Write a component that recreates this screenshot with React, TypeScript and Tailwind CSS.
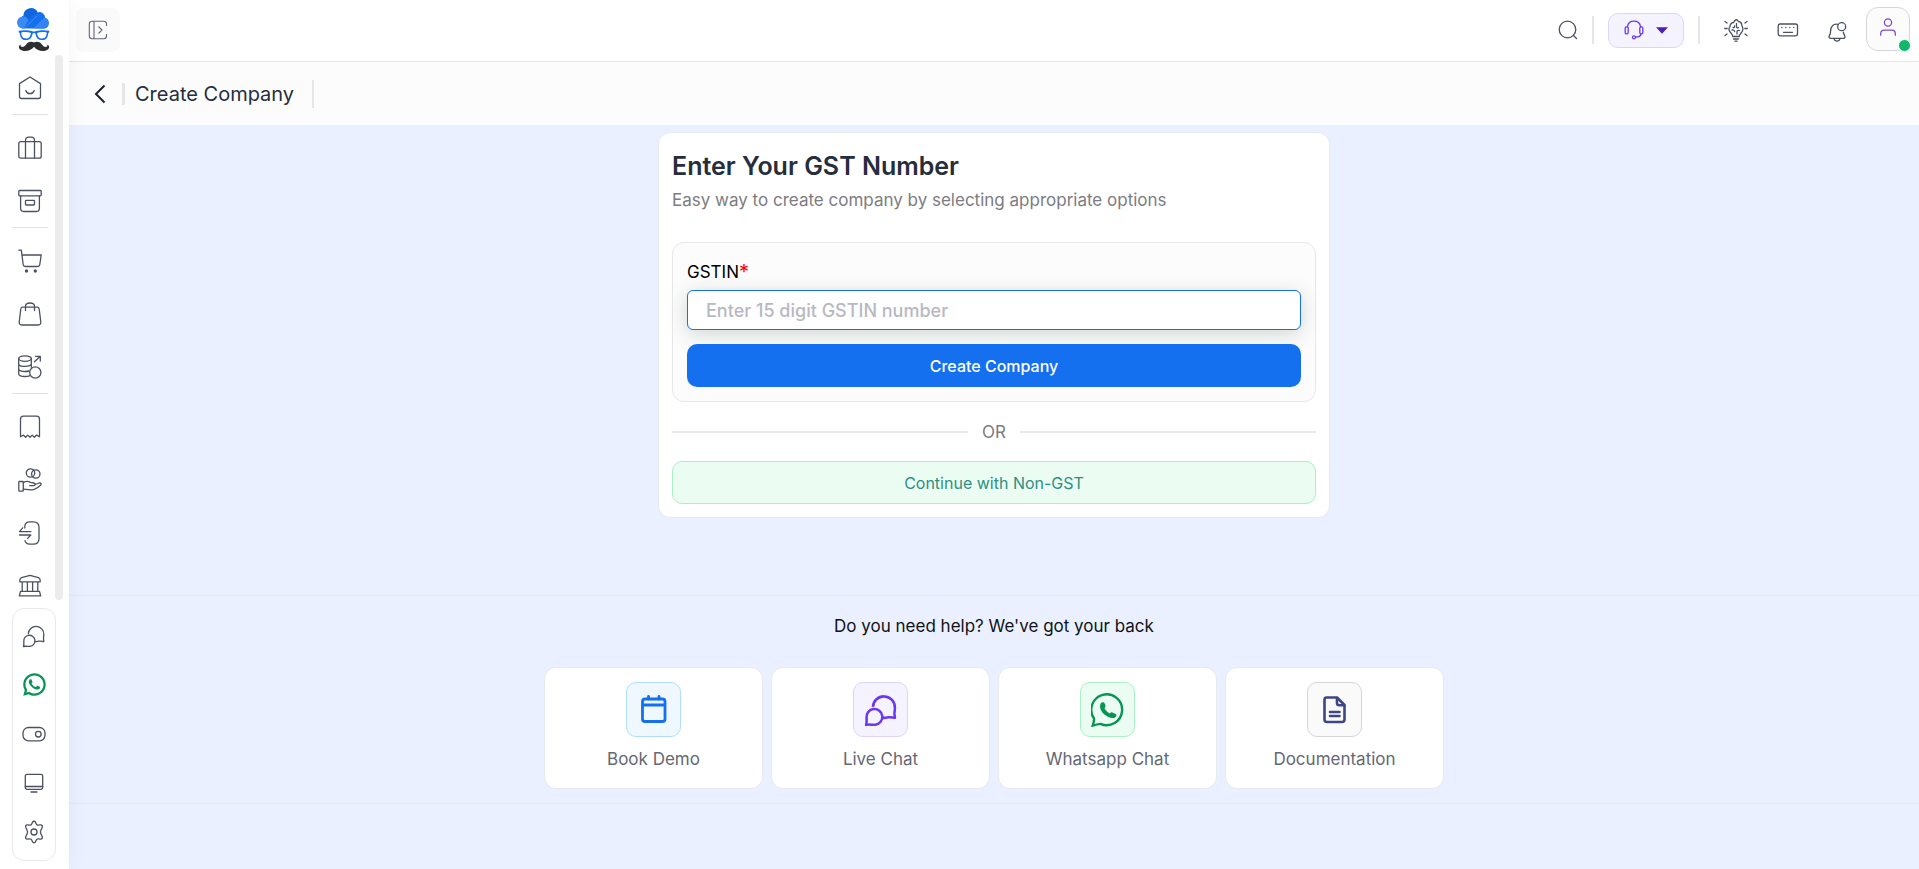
import type { ReactNode } from "react";
import { RiWhatsappLine } from "react-icons/ri";

type IconProps = { className?: string; children?: ReactNode };

function Icon({ className = "size-6", children }: IconProps) {
    return (
        <svg viewBox="0 0 24 24" className={className} fill="none" stroke="currentColor" strokeWidth="1.3" strokeLinecap="round" strokeLinejoin="round" aria-hidden="true">
            {children}
        </svg>
    );
}

function Logo() {
    return (
        <svg viewBox="0 0 36 44" className="h-11 w-9" aria-hidden="true">
            <path d="M6.5 20.5a6 6 0 0 1-1-11.6C6.5 8 7 8 7.600 7.600a7.400 7.400 0 0 1 14-3.200 5.800 5.800 0 0 1 7.600 5.400 5.600 5.600 0 0 1-.7 10.700Z" fill="#1570ef" />
            <path d="M6.500 20.500a6 6 0 0 1-.5-11.800c3-.5 5.500 1 6.500 3.200l-5 8.600Z" fill="#3b8af5" />
            <path d="M18 20.500 28.500 10a5.500 5.500 0 0 1 0 10.500Z" fill="#3383f2" />
            <path d="M7.600 7.600a7.400 7.400 0 0 1 14-3.200L12.500 12C11.500 9.500 9.700 8 7.600 7.600Z" fill="#1265dc" />
            <path d="m8 20.500 13.500-13M18 20.500 29 9.800" stroke="#5a9df7" strokeWidth=".6" />
            <path d="M2.500 22.800c4-.9 10-.9 14 .5 1 .3 2 .3 3 0 4-1.400 10-1.400 14-.5l-.5 1.800-.8.600c-.5 5-2.200 6.800-6 6.800-4 0-5.800-1.800-6.700-6.100-.5-1.200-2.500-1.200-3 0-.9 4.300-2.700 6.100-6.700 6.100-3.800 0-5.500-1.800-6-6.800l-.8-.6Z" fill="#1570ef" />
            <path d="M5.300 24.500c3-.8 6.800-.6 9.700.4-.8 4-2 5.500-5 5.500-3.200 0-4.500-1.500-4.700-5.900ZM30.700 24.500c-3-.8-6.800-.6-9.700.4.8 4 2 5.500 5 5.500 3.200 0 4.500-1.500 4.700-5.900Z" fill="white" />
            <path d="M18 34.500c-2.500-1.600-5.800-.8-7.500 1.400-1.800 2.300-3.600 3.800-5.500 2.600-.7-.6-.4-1.500.3-1.800C2.500 36.500 2 40 4.500 41.800c4.500 2.800 11 .7 13.500-3 2.500 3.700 9 5.800 13.500 3 2.500-1.800 2-5.300-.8-5.100.7.300 1 1.200.3 1.800-1.900 1.200-3.700-.3-5.500-2.600-1.700-2.200-5-3-7.500-1.400Z" fill="#2e302f" />
        </svg>
    );
}

const chatBubbles = (
    <>
        <path d="M6.300 9.800A7.600 7.600 0 0 1 21.800 10.500c.1 1.500-.4 3-.3 4.300l.3 2.700c-1.800-.1-3.200-.7-5-.3-1.500.4-2.700.5-4 .2" />
        <path d="M1.500 22.500c.6-2 .4-3.200.3-5a5.600 5.600 0 1 1 6.200 4.900c-2.400.3-4-.6-6.500.1Z" />
    </>
);

const navItems: { label: string; divider?: boolean; icon: ReactNode }[] = [
    {
        label: "Home",
        divider: true,
        icon: <><path d="M12 1 1.500 7.600v12.900c0 1.300.7 2 2 2h17c1.300 0 2-.7 2-2V7.600Z" /><path d="M7.800 14.500c.7 2.100 2.200 3.200 4.200 3.200s3.500-1.100 4.200-3.200" /></>,
    },
    {
        label: "Companies",
        icon: <><rect x=".8" y="5.700" width="22.400" height="16.500" rx="2" /><path d="M7.500 22V4.500c0-2.200 1.200-3.300 3.200-3.300h2.600c2 0 3.200 1.100 3.200 3.300V22" /></>,
    },
    {
        label: "Inventory",
        divider: true,
        icon: <><rect x=".8" y="1.500" width="22.400" height="5.300" rx=".8" /><path d="M2.600 6.800v12.500c0 2 1.200 3.200 3.200 3.200h12.400c2 0 3.200-1.200 3.200-3.200V6.800" /><rect x="7.500" y="11.300" width="9" height="4.700" rx=".8" /></>,
    },
    {
        label: "Purchases",
        icon: <><path d="M.8 1.200h2.500l1.900 14.300c.2 1.400.9 2 2.200 2h12.200c1.300 0 2-.6 2.200-2L23.200 6H4" /><circle cx="8.500" cy="22" r="1" fill="currentColor" /><circle cx="17.300" cy="22" r="1" fill="currentColor" /></>,
    },
    {
        label: "Sales",
        icon: <><path d="M4.800 5.200h14.400c1.200 0 1.800.6 2 1.800l1.600 13c.2 1.800-.8 3-2.500 3H3.700c-1.700 0-2.700-1.200-2.500-3l1.600-13c.2-1.200.8-1.800 2-1.800Z" /><path d="M7.500 8.500V4c.2-2 2-3 4.500-3s4.300 1 4.500 3v4.500" /></>,
    },
    {
        label: "Payments",
        divider: true,
        icon: <><ellipse cx="7" cy="3.600" rx="6.300" ry="2.700" /><path d="M.7 3.600v15.200c0 1.700 2.600 2.700 6.300 2.700 1.800 0 3.400-.2 4.500-.7M13.300 3.600v8.700M.7 8.700c0 1.700 2.600 2.700 6.300 2.700s6.300-1 6.300-2.700M.7 13.800c0 1.700 2.600 2.700 6.300 2.700 1.600 0 3-.2 4.200-.5" /><circle cx="17.300" cy="17.500" r="5.600" /><path d="m16.500 6.800 5.500-5.300m-4.500-.2h4.800V6" /></>,
    },
    {
        label: "Receipts",
        icon: <path d="M2.500 21.700V4.200C2.500 2.200 3.500 1.200 5.500 1.200h13c2 0 3 1 3 3v17.500l-2.800-1.600-2.300 2.100-2.200-2.100-2.200 2.100-2.200-2.100-2.200 2.100-2.300-2.100Z" />,
    },
    {
        label: "Lending",
        icon: <><circle cx="12.500" cy="5" r="4.200" /><circle cx="17.800" cy="6" r="4.200" /><rect x=".8" y="13.500" width="4.500" height="9.700" rx=".7" /><path d="M5.300 14.700c2.500-1.800 5-1.600 7.200-.3l3.300.6c1.900.5 1.700 2.600-.1 2.700h-4M17.200 16.500l4-1.500c1.800-.3 2.500 1.200 1.300 2.300-3.300 3-6.300 4.900-9.500 4.600l-7.700-.7" /></>,
    },
    {
        label: "Transfers",
        icon: <><path d="M6.800 7V5.300c.2-3 2-4.500 5-4.500h3.400c3.700 0 5.800 2 5.800 5.700v11c0 3.700-2.100 5.700-5.800 5.700h-3.400c-2.500 0-4.300-1.300-4.800-3.500" /><path d="M12.800 10.600H1.500l3.200-3.800M1.500 14h11.300l-3.200 3.400" /></>,
    },
    {
        label: "Banking",
        icon: <><path d="M1.800 6.400c0-1.200.4-2.200 1.800-2.700L12 1.300l8.400 2.400c1.400.5 1.800 1.500 1.800 2.700v1.400H1.800ZM4.200 7.800v9.500M9.400 7.800v9.500M14.600 7.800v9.500M19.800 7.800v9.500M2.500 17.300h19l1.200 4.500H1.300Z" /></>,
    },
];

const toolItems: { label: string; icon: ReactNode }[] = [
    { label: "Live chat", icon: <Icon>{chatBubbles}</Icon> },
    { label: "Whatsapp", icon: <RiWhatsappLine className="size-[27px] text-[#079455]" /> },
    { label: "Toggle", icon: <Icon><rect x="1" y="5.500" width="22" height="13.300" rx="5.500" /><circle cx="16.300" cy="12.200" r="2.800" /></Icon> },
    { label: "Display", icon: <Icon><rect x="3.300" y="3.300" width="17.400" height="15" rx="1.700" /><path d="M3.300 15.500h17.400M9 21h6" /></Icon> },
    { label: "Settings", icon: <Icon><circle cx="12" cy="12" r="3" /><path d="M10.500 2.300c.6-1.400 2.400-1.400 3 0l.8 1.800c.3.700 1.200 1.200 2 1.100l2.200-.3c1.500-.2 2.500 1.400 1.600 2.700l-1.300 3c-.5.900-.5 1.900 0 2.800l1.300 3c.9 1.300-.1 2.900-1.600 2.700l-2.200-.3c-.8-.1-1.700.4-2 1.100l-.8 1.800c-.6 1.400-2.400 1.400-3 0l-.8-1.800c-.3-.7-1.200-1.200-2-1.100l-2.200.3c-1.500.2-2.500-1.400-1.600-2.700l1.300-3c.5-.9.5-1.900 0-2.800l-1.300-3C3 6.300 4 4.700 5.500 4.900l2.200.3c.8.1 1.700-.4 2-1.100Z" /></Icon> },
];

const helpItems: { label: string; box: string; icon: ReactNode }[] = [
    {
        label: "Book Demo",
        box: "border-[#b2ddff] bg-[#eff8ff] text-[#1570ef]",
        icon: <svg viewBox="0 0 32 32" className="size-8" fill="none" stroke="currentColor" strokeWidth="2.800" strokeLinecap="round"><rect x="4.500" y="5" width="22.500" height="22.500" rx="2.500" /><path d="M5 11h21.500M10.500 5V2.500M21 5V2.500" /></svg>,
    },
    {
        label: "Live Chat",
        box: "border-[#d9d6fe] bg-[#f4f3ff] text-[#6938ef]",
        icon: <svg viewBox="0 0 24 24" className="size-[34px]" fill="none" stroke="currentColor" strokeWidth="1.800" strokeLinejoin="round">{chatBubbles}</svg>,
    },
    {
        label: "Whatsapp Chat",
        box: "border-[#aaf0c4] bg-[#ebfdf2] text-[#079455]",
        icon: (
            <svg viewBox="0 0 24 24" className="size-[34px]" aria-hidden="true">
                <path d="M1.200 23c.8-2.400 1.200-3.800.9-5A10.900 10.900 0 1 1 6.700 21.800c-1.700.2-3.500.6-5.500 1.200Z" fill="none" stroke="currentColor" strokeWidth="1.700" />
                <path d="M7.800 6.600c.9-.3 1.600 0 1.900.9l.5 1.400c.2.7 0 1.100-.6 1.800.8 1.700 2 2.900 3.700 3.700.7-.7 1.100-.9 1.800-.6l2 .8c.9.4 1 1 .7 1.800-.6 1.200-2 1.500-3.400 1.200C10 16.600 6.700 13 6.400 10c-.1-1.500.3-2.900 1.400-3.400Z" fill="currentColor" />
            </svg>
        ),
    },
    {
        label: "Documentation",
        box: "border-[#d6d6d8] bg-[#fafafa] text-[#3e4784]",
        icon: <svg viewBox="0 0 32 32" className="size-8" fill="none" stroke="currentColor" strokeWidth="2.600" strokeLinecap="round" strokeLinejoin="round"><path d="M7.500 3.500h10.500l7.500 7.500v14.500c0 1.700-.8 2.500-2.500 2.500H8c-1.700 0-2.500-.8-2.500-2.500V6c0-1.700.5-2.500 2-2.500Z" /><path d="M18 4v5c0 1.500.7 2.200 2.200 2.200h5M11 18h9.500M11 22h9.500" /></svg>,
    },
];

function Sidebar() {
    return (
        <aside className="relative z-10 flex h-full w-[69px] shrink-0 flex-col bg-white shadow-[0_0_20px_rgba(16,24,40,0.05)]">
            <a href="#home" aria-label="Dashboard" className="ml-4 mt-2 shrink-0">
                <Logo />
            </a>
            <div className="mb-2 mt-[3px] flex min-h-0 flex-1 justify-between">
                <nav className="mt-1.5 flex-1 overflow-hidden pl-3 text-[#4b5161]">
                    {navItems.map((item) => (
                        <div key={item.label}>
                            <a href="#nav" aria-label={item.label} className="flex h-[53px] w-9 items-center justify-center">
                                <Icon>{item.icon}</Icon>
                            </a>
                            {item.divider && <div className="mb-1.5 h-px w-9 bg-[#e2e2e5]" />}
                        </div>
                    ))}
                </nav>
                <div className="mr-1.5 w-2 rounded-full bg-[#ececec]" />
            </div>
            <div className="mb-2 ml-3 flex w-11 shrink-0 flex-col items-center rounded-xl border border-[#e9e9ea] pb-1 pt-0.5 text-[#4b5161]">
                {toolItems.map((item) => (
                    <button key={item.label} type="button" aria-label={item.label} className="flex h-[49px] w-full items-center justify-center">
                        {item.icon}
                    </button>
                ))}
            </div>
        </aside>
    );
}

function TopBar() {
    return (
        <header className="flex h-[62px] shrink-0 items-center justify-between border-b border-[#e6e6e8] bg-white pb-px pl-[7px] pr-[9px] text-[#4b5161]">
            <button type="button" aria-label="Expand menu" className="flex size-11 items-center justify-center rounded-lg bg-[#fafafa] text-[#626776]">
                <svg viewBox="0 0 20 20" className="size-5" fill="none" stroke="currentColor" strokeWidth="1.100">
                    <path d="M18.500 6V4c0-1.700-1-2.700-2.700-2.700H4C2.300 1.300 1.300 2.300 1.300 4v12c0 1.700 1 2.700 2.700 2.700h11.800c1.700 0 2.700-1 2.700-2.700v-2M6 1.300v17.400M10.500 6.500l3.500 3.500-3.500 3.500" />
                </svg>
            </button>
            <div className="flex items-center">
                <button type="button" aria-label="Search">
                    <svg viewBox="0 0 20 20" className="size-5" fill="none" stroke="currentColor" strokeWidth="1.300" strokeLinecap="round"><circle cx="9.500" cy="9.500" r="8.300" /><path d="m15.500 15.500 3 3" /></svg>
                </button>
                <div className="ml-3.5 h-7 w-0.5 bg-[#e6e6e8]" />
                <button type="button" aria-label="Support" className="ml-3.5 flex h-[35px] w-[76px] items-center justify-center gap-3 rounded-[10px] border border-[#d9d6fe] bg-[#f4f3ff] text-[#6938ef]">
                    <svg viewBox="0 0 20 20" className="size-5" fill="none" stroke="currentColor" strokeWidth="1.300" strokeLinecap="round">
                        <rect x="1.200" y="6.800" width="3" height="7" rx="1.200" /><rect x="15.800" y="6.800" width="3" height="7" rx="1.200" />
                        <path d="M3.500 6.500C4 3.200 6.600 1.200 10 1.200s6 2 6.500 5.300M17 13.800c-.4 2.500-2.200 3.300-5.200 3.300" /><circle cx="10" cy="17.300" r="1.500" />
                    </svg>
                    <svg viewBox="0 0 12 7" className="h-[7px] w-3 text-[#4a1fb8]" fill="currentColor"><path d="M0 .3h12L6 6.700Z" /></svg>
                </button>
                <div className="ml-3.5 h-7 w-0.5 bg-[#e6e6e8]" />
                <button type="button" aria-label="Ideas" className="ml-6">
                    <Icon>
                        <path d="M8.700 18.500c0-2-1.200-2.700-2.200-4-1.800-1.800-1.700-4.300-.5-5.800.1-2.500 1.600-4 3.600-4.200C11 1 13 1 14.400 3.500c2 .2 3.500 2 3.600 4.700 1.200 1.500 1.300 4.500-.5 6.300-1 1.300-2.200 2-2.200 4ZM9.500 21h5M11 23.200h2" />
                        <path d="M9 9.500c1 .5 2-.5 1.500-1.700M12.500 5.500v3c0 1 .7 1.500 2 1.200M8 12c1.500-.3 2.500.3 2.600 1.500M15.500 12.500c-1.500-.5-2.500 0-2.500 1.500v2" />
                        <path d="M1 3.500 3 5M.7 10.500h2.500M1 17.500 3 16M23 3.500 21 5M23.300 10.500h-2.500M23 17.500 21 16" />
                    </Icon>
                </button>
                <button type="button" aria-label="Keyboard shortcuts" className="ml-7">
                    <Icon><rect x="2.200" y="6" width="19.300" height="11.800" rx="2" /><path d="M5.800 9.500h.1M9.800 9.500h.1M13.800 9.500h.1M17.800 9.500h.1M7.500 14.300h9" /></Icon>
                </button>
                <button type="button" aria-label="Notifications" className="ml-[25px] pt-1">
                    <Icon><path d="M13 4.300C8 3.500 5.800 7 5.700 10.500c0 3-.6 4-1.400 5.300-.7 1.300-.2 2.600 1.400 2.600h12.600c1.600 0 2.100-1.300 1.400-2.600-.7-1.200-1.200-2-1.300-3.700M9 18.700c.4 1.700 1.400 2.500 3 2.500s2.600-.8 3-2.500" /><circle cx="16.700" cy="6.700" r="4" /></Icon>
                </button>
                <button type="button" aria-label="Profile" className="relative mb-0.5 ml-[17px] flex size-11 items-center justify-center rounded-xl border border-[#d6d6d8] bg-[#fcfcfc] text-[#7a4ad8]">
                    <svg viewBox="0 0 20 20" className="mb-1 size-5" fill="none" stroke="currentColor" strokeWidth="1.300" strokeLinecap="round"><circle cx="10" cy="5.500" r="3.600" /><path d="M2.700 18.200v-1.400c0-2.400 1.200-3.600 3.600-3.600h7.400c2.400 0 3.600 1.200 3.600 3.600v1.400" /></svg>
                    <span className="absolute -bottom-0.5 -right-0.5 size-[13px] rounded-full border border-white bg-[#12b76a]" />
                </button>
            </div>
        </header>
    );
}

function GstForm() {
    return (
        <section className="mx-auto mt-[7px] w-full max-w-[672px] rounded-xl border border-[#e7e9ef] bg-white p-[13px]">
            <h2 className="mt-1 text-[25px] font-semibold leading-8 text-[#262d3b]">Enter Your GST Number</h2>
            <p className="mt-1.5 text-[17px] leading-6 text-[#7c7c82]">Easy way to create company by selecting appropriate options</p>
            <form className="mt-[30px] rounded-xl border border-[#e7e7e9] bg-[#fcfcfc] px-3.5 pb-3.5 pt-[17px]">
                <label htmlFor="gstin" className="flex text-[17px] leading-6 text-black">
                    GSTIN<span className="text-xl leading-6 text-[#ff0000]">*</span>
                </label>
                <input
                    id="gstin"
                    type="text"
                    placeholder="Enter 15 digit GSTIN number"
                    className="mt-1.5 h-10 w-full rounded-md border border-[#1570ef] bg-white px-[18px] text-lg font-medium text-gray-900 shadow-[0_4px_20px_rgba(16,40,40,0.18)] outline-none placeholder:text-[#b8b8c3]"
                />
                <button type="button" className="relative mt-3.5 h-[43px] w-full rounded-[10px] bg-[#1570ef] text-base font-medium text-white">
                    Create Company
                </button>
            </form>
            <div className="mt-[18px] flex items-center gap-3.5 text-[17px] leading-6 text-[#7c7c82]">
                <div className="h-0.5 flex-1 bg-[#e9e9ea]" />
                OR
                <div className="h-0.5 flex-1 bg-[#e9e9ea]" />
            </div>
            <button type="button" className="mt-[17px] h-[43px] w-full rounded-[10px] border border-[#aaf0c4] bg-[#ebfdf2] text-base text-[#2f8f83]">
                Continue with Non-GST
            </button>
        </section>
    );
}

function HelpSection() {
    return (
        <section className="mt-[77px] border-y border-[#e4e8ef] pb-3.5 pt-[18px]">
            <h3 className="text-center text-[17px] leading-6 text-[#101216]">Do you need help? We've got your back</h3>
            <div className="mx-auto mt-[29px] grid max-w-[900px] grid-cols-4 gap-2">
                {helpItems.map((item) => (
                    <a key={item.label} href="#help" className="flex flex-col items-center rounded-xl border border-[#e7e9ef] bg-white px-2 pb-[17px] pt-3.5">
                        <span className={`flex size-[55px] items-center justify-center rounded-[10px] border ${item.box}`}>{item.icon}</span>
                        <span className="mt-2.5 text-[17px] leading-6 text-[#646873]">{item.label}</span>
                    </a>
                ))}
            </div>
        </section>
    );
}

export default function App() {
    return (
        <div className="flex h-screen overflow-hidden bg-[#eaf0ff] font-['Inter',sans-serif]">
            <Sidebar />
            <div className="flex min-w-0 flex-1 flex-col">
                <TopBar />
                <div className="flex h-[63px] shrink-0 items-center bg-[#fcfcfc] pl-[25px]">
                    <button type="button" aria-label="Back">
                        <svg viewBox="0 0 12 20" className="h-5 w-3" fill="none" stroke="#1d2230" strokeWidth="2"><path d="M10.500 1.500 2 10l8.500 8.500" /></svg>
                    </button>
                    <div className="ml-4 h-[22px] w-[3px] bg-[#e6e6e8]" />
                    <h1 className="ml-2.5 text-xl font-normal leading-7 text-[#262d3b]">Create Company</h1>
                    <div className="ml-[18px] h-7 w-0.5 bg-[#e6e6e8]" />
                </div>
                <main className="min-h-0 flex-1 overflow-hidden">
                    <GstForm />
                    <HelpSection />
                </main>
            </div>
        </div>
    );
}
